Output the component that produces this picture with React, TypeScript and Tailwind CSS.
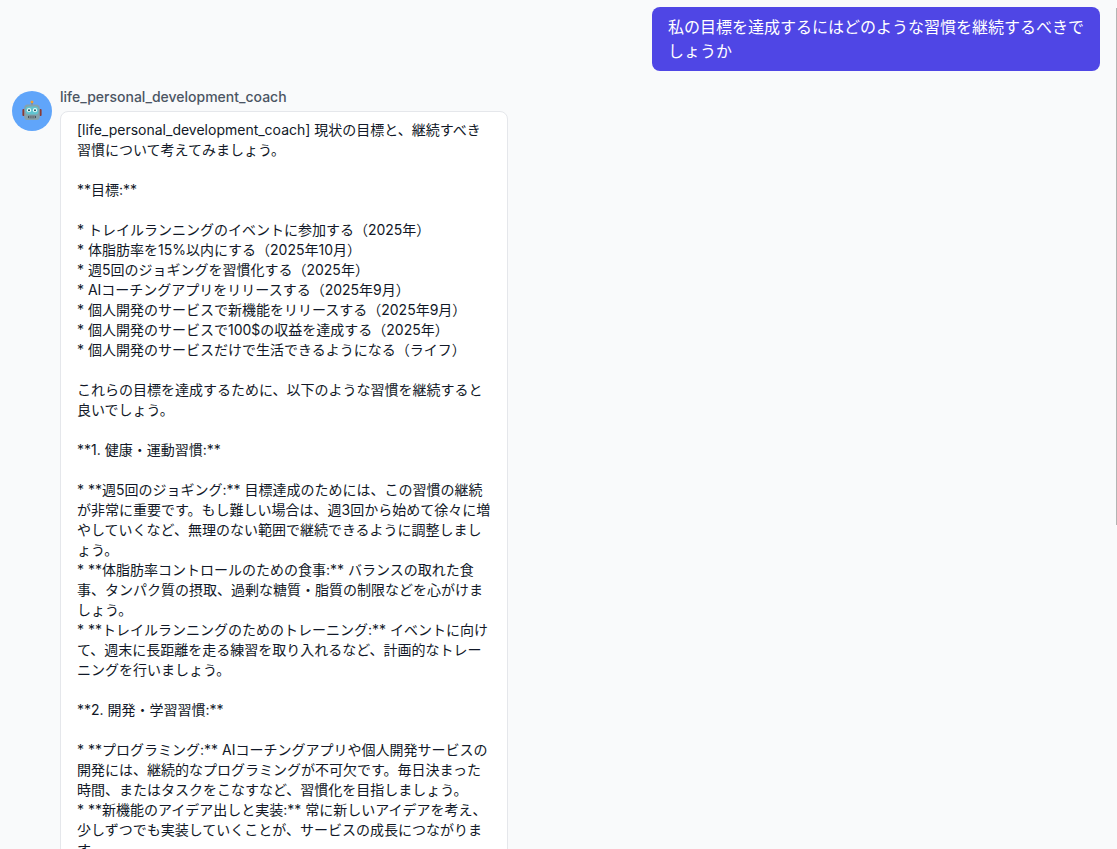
const answer = `[life_personal_development_coach] 現状の目標と、継続すべき習慣について考えてみましょう。

**目標:**

* トレイルランニングのイベントに参加する（2025年）
* 体脂肪率を15%以内にする（2025年10月）
* 週5回のジョギングを習慣化する（2025年）
* AIコーチングアプリをリリースする（2025年9月）
* 個人開発のサービスで新機能をリリースする（2025年9月）
* 個人開発のサービスで100$の収益を達成する（2025年）
* 個人開発のサービスだけで生活できるようになる（ライフ）

これらの目標を達成するために、以下のような習慣を継続すると良いでしょう。

**1. 健康・運動習慣:**

* **週5回のジョギング:** 目標達成のためには、この習慣の継続が非常に重要です。もし難しい場合は、週3回から始めて徐々に増やしていくなど、無理のない範囲で継続できるように調整しましょう。
* **体脂肪率コントロールのための食事:** バランスの取れた食事、タンパク質の摂取、過剰な糖質・脂質の制限などを心がけましょう。
* **トレイルランニングのためのトレーニング:** イベントに向けて、週末に長距離を走る練習を取り入れるなど、計画的なトレーニングを行いましょう。

**2. 開発・学習習慣:**

* **プログラミング:** AIコーチングアプリや個人開発サービスの開発には、継続的なプログラミングが不可欠です。毎日決まった時間、またはタスクをこなすなど、習慣化を目指しましょう。
* **新機能のアイデア出しと実装:** 常に新しいアイデアを考え、少しずつでも実装していくことが、サービスの成長につながります。`;

function RobotIcon() {
  return (
    <svg width="20" height="22" viewBox="0 0 20 22" aria-hidden="true">
      <circle cx="10" cy="2" r="1.5" fill="#f0a030" />
      <rect x="9.2" y="3" width="1.6" height="2" fill="#7d8a92" />
      <rect x="0.4" y="9" width="2.6" height="7" rx="1" fill="#8c3a32" />
      <rect x="17" y="9" width="2.6" height="7" rx="1" fill="#8c3a32" />
      <rect x="2.2" y="4.5" width="15.6" height="15.5" rx="3.5" fill="#86a2ac" />
      <rect x="3.6" y="6.5" width="12.8" height="8" rx="3" fill="#5fc4d0" />
      <circle cx="7" cy="10.2" r="2.1" fill="#e8fbfc" />
      <circle cx="13" cy="10.2" r="2.1" fill="#e8fbfc" />
      <circle cx="7" cy="10.2" r="1" fill="#14505c" />
      <circle cx="13" cy="10.2" r="1" fill="#14505c" />
      <rect x="6" y="15.8" width="8" height="2.4" rx="1" fill="#3f5059" />
      <rect x="7.6" y="15.8" width="0.7" height="2.4" fill="#cfd8dc" />
      <rect x="9.65" y="15.8" width="0.7" height="2.4" fill="#cfd8dc" />
      <rect x="11.7" y="15.8" width="0.7" height="2.4" fill="#cfd8dc" />
    </svg>
  );
}

export default function App() {
  return (
    <div className="relative h-[849px] overflow-hidden bg-[#f9fafb] font-['Inter','Noto_Sans_CJK_JP',sans-serif]">
      <div className="flex flex-col gap-4 pt-[7px] pl-3 pr-[17px]">
        <div className="flex justify-end">
          <div className="w-[448px] rounded-lg bg-[#4f46e5] px-4 py-2 text-white">
            私の目標を達成するにはどのような習慣を継続するべきでしょうか
          </div>
        </div>
        <div className="flex gap-2">
          <div className="mt-1 flex size-10 shrink-0 items-center justify-center rounded-full bg-[#60a5fa]">
            <RobotIcon />
          </div>
          <div className="w-[448px]">
            <div className="mb-1 text-sm font-medium text-[#4b5563]">life_personal_development_coach</div>
            <div className="rounded-lg border border-[#e5e7eb] bg-white px-4 py-2 text-sm whitespace-pre-wrap text-[#111827]">
              {answer}
            </div>
          </div>
        </div>
      </div>
      {/* scrollbar thumb */}
      <div className="absolute top-[8px] right-0 h-[517px] w-px bg-[#b4b4b4]" />
    </div>
  );
}
